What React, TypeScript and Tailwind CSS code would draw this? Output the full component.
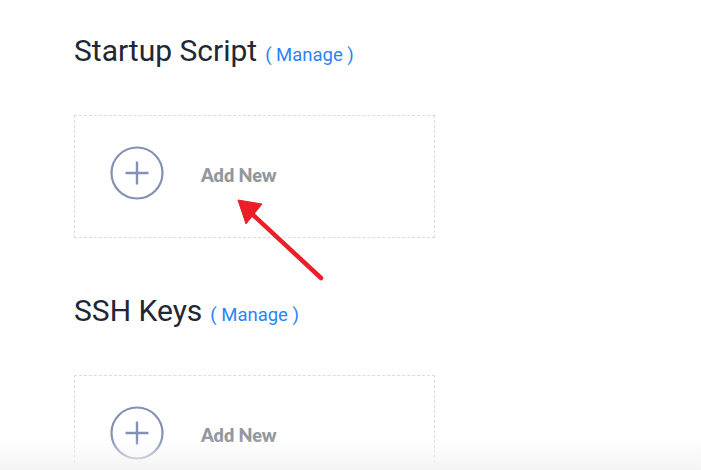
function PlusCircle() {
  return (
    <svg width="54" height="54" viewBox="0 0 54 54" fill="none">
      <circle cx="27" cy="27" r="25.5" stroke="#8491b2" strokeWidth="2.2" />
      <path d="M15.5 27h23M27 15.5v23" stroke="#8491b2" strokeWidth="2.4" />
    </svg>
  );
}

function Section({ title }: { title: string }) {
  return (
    <section className="flex flex-col">
      <h2 className="flex items-baseline gap-[8px] text-[30px] leading-[34px] text-[#222733]">
        {title}
        <a className="text-[18.5px] text-[#2b84f5] cursor-pointer">( Manage )</a>
      </h2>
      <div className="mt-[43px] flex h-[123px] w-[361px] items-center border border-dashed border-[#dcdcdc] pb-[8px] pl-[35px]">
        <PlusCircle />
        <span
          className="ml-[37px] mt-[6px] text-[18px] font-extrabold text-[#93979e]"
          style={{ fontFamily: "Lato, 'Open Sans', sans-serif" }}
        >
          Add New
        </span>
      </div>
    </section>
  );
}

export default function App() {
  return (
    <div
      className="relative h-[470px] w-[701px] overflow-hidden bg-white"
      style={{ fontFamily: "Roboto, 'Noto Sans', sans-serif" }}
    >
      <div className="flex flex-col gap-[56px] pl-[74px] pt-[34px]">
        <Section title="Startup Script" />
        <Section title="SSH Keys" />
      </div>

      {/* annotation arrow */}
      <svg className="pointer-events-none absolute left-0 top-0" width="701" height="470">
        <path d="M321 278L251 213" stroke="#ea1f27" strokeWidth="4.5" strokeLinecap="round" />
        <path d="M238 200L262 204L246 224Z" fill="#ea1f27" stroke="#ea1f27" strokeWidth="1" strokeLinejoin="round" />
      </svg>

      <div className="pointer-events-none absolute bottom-0 left-0 h-[32px] w-full bg-gradient-to-b from-transparent to-[#f4f4f4]" />
    </div>
  );
}
